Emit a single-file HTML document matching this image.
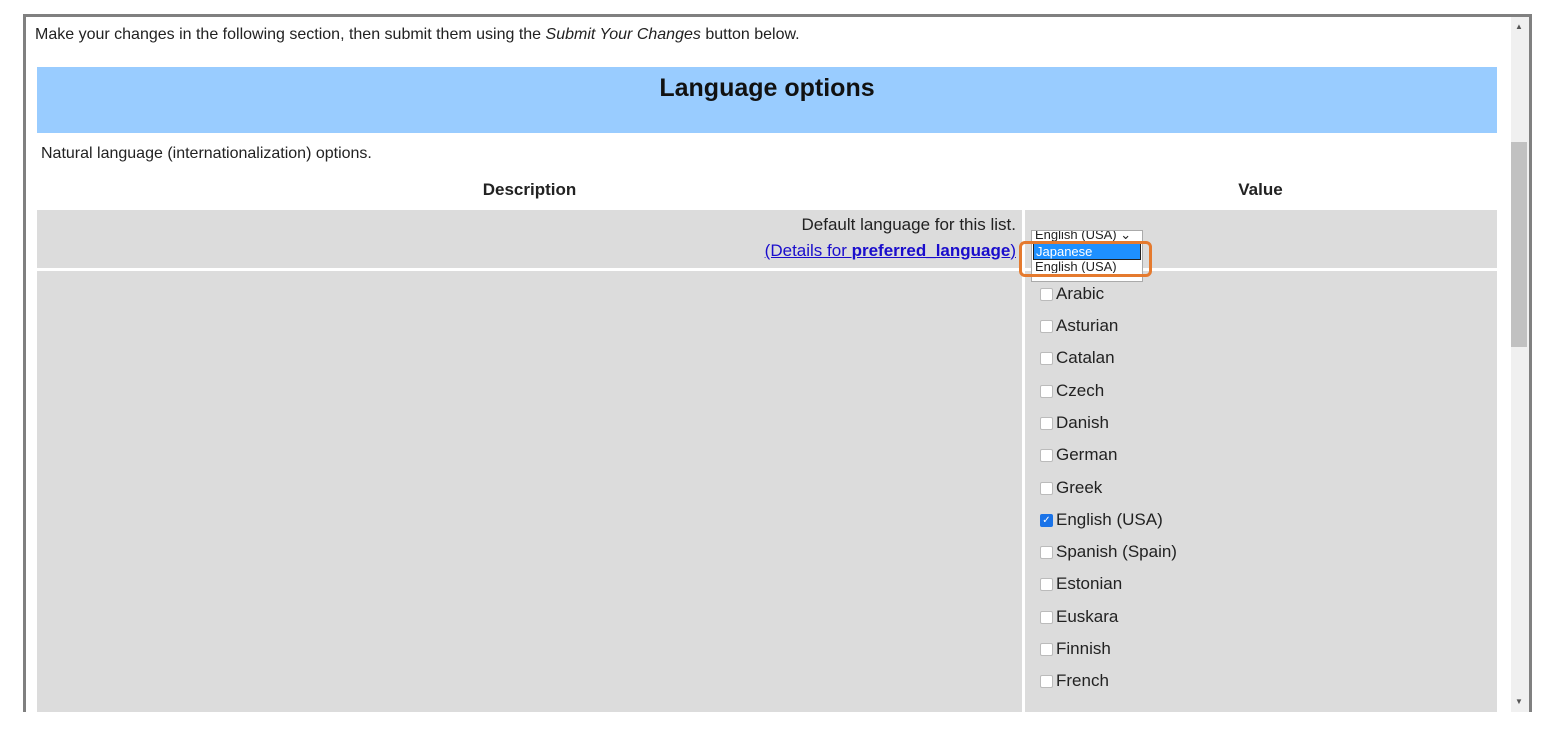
<html><head><style>
body{margin:0;width:1555px;height:749px;background:#fff;font-family:"Liberation Sans",sans-serif;font-size:16px;color:#222;position:relative;overflow:hidden}
.a{position:absolute}
.frame{left:23px;top:14px;width:1503px;height:695px;border:3px solid #808080;overflow:hidden;background:#fff}
.cb{position:absolute;left:1040px;width:11px;height:11px;border:1px solid #bbb;border-radius:2px;background:#fff}
.lb{position:absolute;left:1056px;font-size:17px}
</style></head><body>
<div class="a frame">
<div class="a" style="left:9px;top:9px;font-size:16px">Make your changes in the following section, then submit them using the <i>Submit Your Changes</i> button below.</div>
<div class="a" style="left:11px;top:50px;width:1460px;height:66px;background:#99ccff"></div>
<div class="a" style="left:11px;top:57px;width:1460px;text-align:center;font-size:25px;font-weight:bold;color:#111">Language options</div>
<div class="a" style="left:15px;top:128px">Natural language (internationalization) options.</div>
<div class="a" style="left:11px;top:163px;width:985px;text-align:center;font-weight:bold;font-size:17px">Description</div>
<div class="a" style="left:998px;top:163px;width:473px;text-align:center;font-weight:bold;font-size:17px">Value</div>
<div class="a" style="left:11px;top:193px;width:985px;height:58px;background:#dcdcdc"></div>
<div class="a" style="left:999px;top:193px;width:472px;height:58px;background:#dcdcdc"></div>
<div class="a" style="left:11px;top:254px;width:985px;height:450px;background:#dcdcdc"></div>
<div class="a" style="left:999px;top:254px;width:472px;height:450px;background:#dcdcdc"></div>
<div class="a" style="left:11px;top:198px;width:979px;text-align:right;font-size:17px">Default language for this list.</div>
<div class="a" style="left:11px;top:224px;width:979px;text-align:right;font-size:17px;color:#1a0dcc;text-decoration:underline">(Details for <b>preferred_language</b>)</div>
<div class="a" style="left:1005px;top:213px;width:110px;height:50px;background:#fff;border:1px solid #aaa;font-size:13px;line-height:16px">
<div style="height:11px;overflow:hidden;padding-left:3px;line-height:8px">English (USA) ⌄</div>
<div style="margin:1px 1px;background:#1e90ff;color:#fff;border:1px solid #222;padding-left:2px;height:15px;line-height:15px">Japanese</div>
<div style="padding-left:3px;line-height:12px;height:12px;overflow:hidden">English (USA)</div>
</div>
<div class="a" style="left:993px;top:224px;width:127px;height:30px;border:3px solid #e57a2e;border-radius:6px"></div>
<div class="a" style="left:1485px;top:0;width:18px;height:695px;background:#f0f0f0"></div>
<div class="a" style="left:1485px;top:125px;width:16px;height:205px;background:#c1c1c1"></div>
<div class="a" style="left:1489px;top:5px;font-size:8px;color:#555">▲</div>
<div class="a" style="left:1489px;top:680px;font-size:8px;color:#555">▼</div>
</div>
<div class="cb" style="top:288px"></div><div class="lb" style="top:284px">Arabic</div>
<div class="cb" style="top:320px"></div><div class="lb" style="top:316px">Asturian</div>
<div class="cb" style="top:352px"></div><div class="lb" style="top:348px">Catalan</div>
<div class="cb" style="top:385px"></div><div class="lb" style="top:381px">Czech</div>
<div class="cb" style="top:417px"></div><div class="lb" style="top:413px">Danish</div>
<div class="cb" style="top:449px"></div><div class="lb" style="top:445px">German</div>
<div class="cb" style="top:482px"></div><div class="lb" style="top:478px">Greek</div>
<div class="cb" style="top:514px;background:#1a73e8;border-color:#1a73e8;color:#fff;font-size:10px;line-height:11px;text-align:center">✓</div><div class="lb" style="top:510px">English (USA)</div>
<div class="cb" style="top:546px"></div><div class="lb" style="top:542px">Spanish (Spain)</div>
<div class="cb" style="top:578px"></div><div class="lb" style="top:574px">Estonian</div>
<div class="cb" style="top:611px"></div><div class="lb" style="top:607px">Euskara</div>
<div class="cb" style="top:643px"></div><div class="lb" style="top:639px">Finnish</div>
<div class="cb" style="top:675px"></div><div class="lb" style="top:671px">French</div>
<div class="a" style="left:23px;top:712px;width:1509px;height:37px;background:#fff"></div>
</body></html>
